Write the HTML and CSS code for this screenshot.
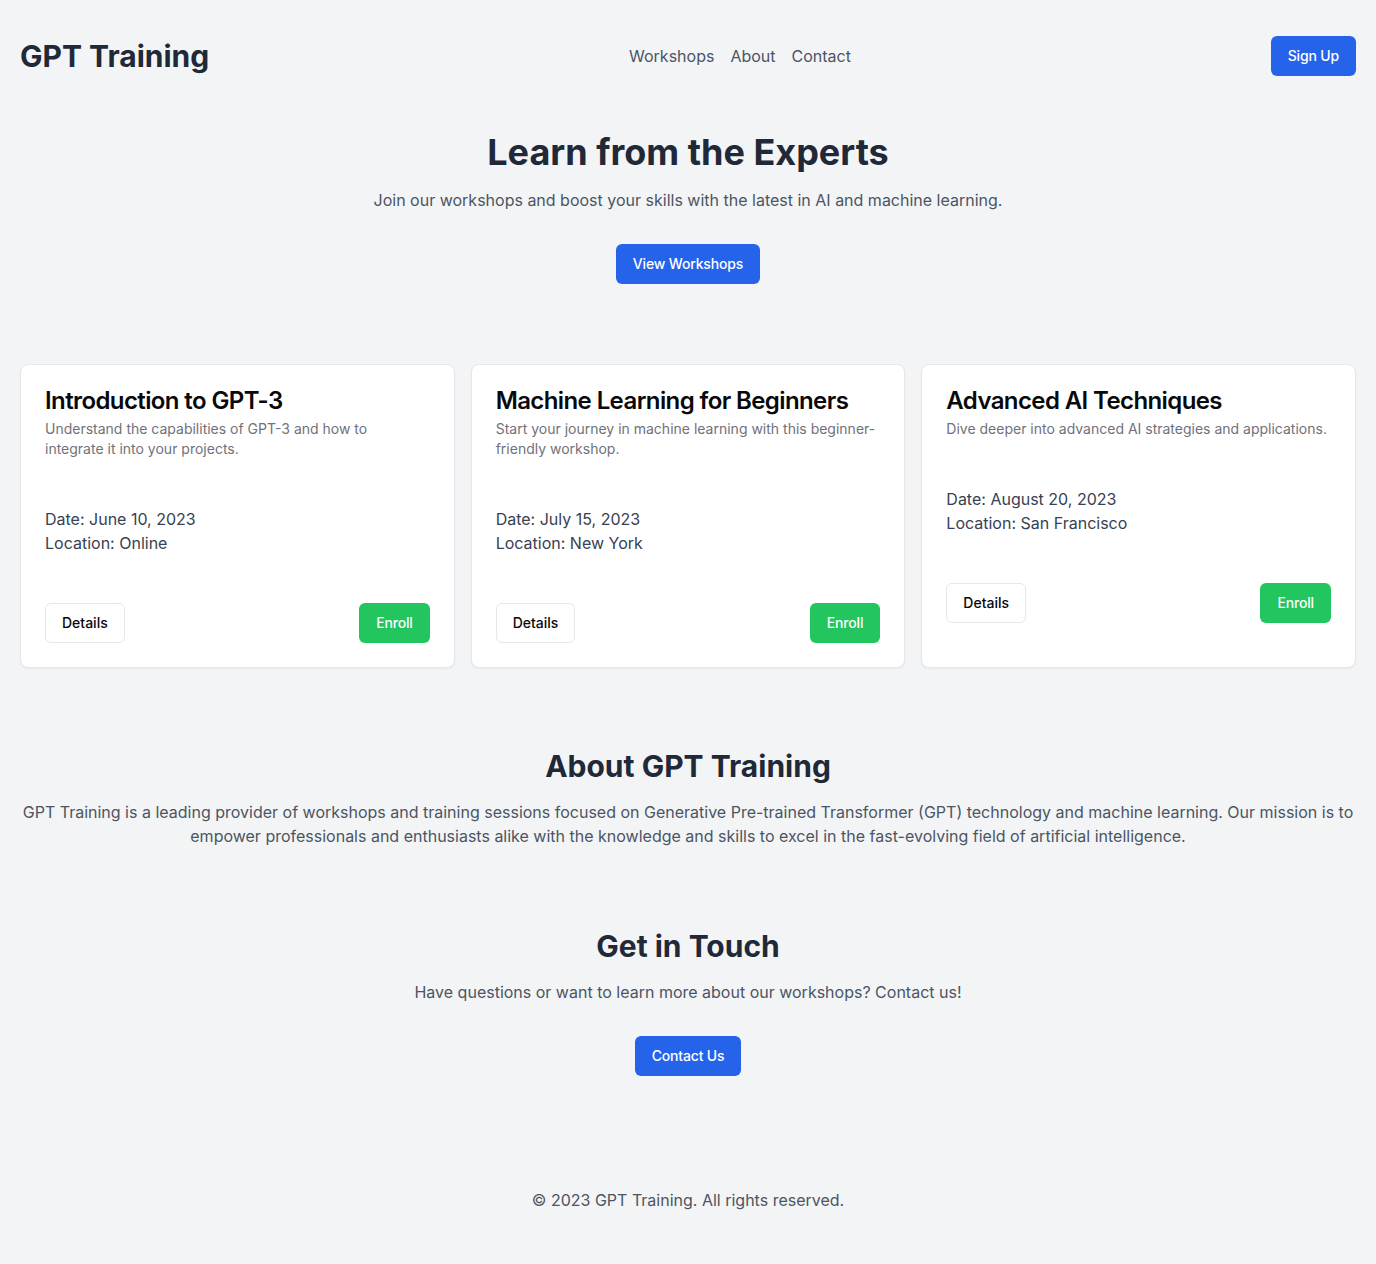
FILE: index.html
```html
<!DOCTYPE html>
<html lang="en">
<head>
<meta charset="utf-8">
<title>GPT Training</title>
<link rel="stylesheet" href="styles.css">
</head>
<body>
<div class="page">
  <header class="site-header">
    <div class="logo">GPT Training</div>
    <nav class="nav">
      <a href="#workshops">Workshops</a>
      <a href="#about">About</a>
      <a href="#contact">Contact</a>
    </nav>
    <button class="btn btn-primary">Sign Up</button>
  </header>

  <section class="hero">
    <h1>Learn from the Experts</h1>
    <p>Join our workshops and boost your skills with the latest in AI and machine learning.</p>
    <button class="btn btn-primary">View Workshops</button>
  </section>

  <section class="workshops" id="workshops">
    <div class="card">
      <div class="card-header">
        <h3 class="card-title">Introduction to GPT-3</h3>
        <p class="card-desc">Understand the capabilities of GPT-3 and how to integrate it into your projects.</p>
      </div>
      <div class="card-content">
        <p>Date: June 10, 2023</p>
        <p>Location: Online</p>
      </div>
      <div class="card-footer">
        <button class="btn btn-outline">Details</button>
        <button class="btn btn-green">Enroll</button>
      </div>
    </div>
    <div class="card">
      <div class="card-header">
        <h3 class="card-title">Machine Learning for Beginners</h3>
        <p class="card-desc">Start your journey in machine learning with this beginner-friendly workshop.</p>
      </div>
      <div class="card-content">
        <p>Date: July 15, 2023</p>
        <p>Location: New York</p>
      </div>
      <div class="card-footer">
        <button class="btn btn-outline">Details</button>
        <button class="btn btn-green">Enroll</button>
      </div>
    </div>
    <div class="card">
      <div class="card-header">
        <h3 class="card-title">Advanced AI Techniques</h3>
        <p class="card-desc">Dive deeper into advanced AI strategies and applications.</p>
      </div>
      <div class="card-content">
        <p>Date: August 20, 2023</p>
        <p>Location: San Francisco</p>
      </div>
      <div class="card-footer">
        <button class="btn btn-outline">Details</button>
        <button class="btn btn-green">Enroll</button>
      </div>
    </div>
  </section>

  <section class="about" id="about">
    <h2>About GPT Training</h2>
    <p>GPT Training is a leading provider of workshops and training sessions focused on Generative Pre-trained Transformer (GPT) technology and machine learning. Our mission is to empower professionals and enthusiasts alike with the knowledge and skills to excel in the fast-evolving field of artificial intelligence.</p>
  </section>

  <section class="contact" id="contact">
    <h2>Get in Touch</h2>
    <p>Have questions or want to learn more about our workshops? Contact us!</p>
    <button class="btn btn-primary">Contact Us</button>
  </section>

  <footer class="site-footer">
    <p>© 2023 GPT Training. All rights reserved.</p>
  </footer>
</div>
</body>
</html>
```

FILE: styles.css
```css
* {
  box-sizing: border-box;
}

html, body {
  margin: 0;
  padding: 0;
}

body {
  background: #f3f4f6;
  font-family: Inter, "Liberation Sans", Arial, sans-serif;
  color: #1f2937;
  font-size: 16px;
  line-height: 24px;
}

h1, h2, h3, p {
  margin: 0;
}

.page {
  padding: 20px;
}

.site-header {
  display: flex;
  justify-content: space-between;
  align-items: center;
  padding: 16px 0;
}

.logo {
  font-size: 30px;
  line-height: 36px;
  font-weight: 700;
  color: #1f2937;
}

.nav {
  display: flex;
  gap: 16px;
}

.nav a {
  color: #4b5563;
  text-decoration: none;
  font-size: 16px;
  line-height: 24px;
}

.btn {
  display: inline-flex;
  align-items: center;
  justify-content: center;
  height: 40px;
  padding: 0 16px;
  border-radius: 6px;
  font-family: inherit;
  font-size: 14px;
  line-height: 20px;
  font-weight: 500;
  border: 1px solid transparent;
  cursor: pointer;
}

.btn-primary {
  background: #2563eb;
  color: #ffffff;
  letter-spacing: -0.012em;
}

.btn-green {
  background: #22c55e;
  color: #ffffff;
  letter-spacing: -0.012em;
}

.btn-outline {
  background: #ffffff;
  border-color: #e5e7eb;
  color: #09090b;
}

.hero {
  padding: 40px 0;
  text-align: center;
}

.hero h1 {
  font-size: 36px;
  line-height: 40px;
  font-weight: 700;
  color: #1f2937;
  margin-bottom: 16px;
}

.hero p {
  color: #4b5563;
  margin-bottom: 32px;
}

.workshops {
  display: grid;
  grid-template-columns: repeat(3, 1fr);
  gap: 16px;
  padding: 40px 0;
}

.card {
  background: #ffffff;
  border: 1px solid #e5e7eb;
  border-radius: 8px;
  box-shadow: 0 1px 2px rgba(0, 0, 0, 0.05);
  display: flex;
  flex-direction: column;
}

.card-header {
  padding: 24px 24px 24px;
  display: flex;
  flex-direction: column;
  gap: 6px;
}

.card-title {
  font-size: 24px;
  line-height: 24px;
  font-weight: 600;
  letter-spacing: -0.025em;
  color: #09090b;
}

.card-desc {
  font-size: 14px;
  line-height: 20px;
  color: #71717a;
}

.card-content {
  padding: 24px;
  color: #374151;
}

.card-footer {
  padding: 24px;
  display: flex;
  justify-content: space-between;
  align-items: center;
}

.about,
.contact {
  padding: 40px 0;
  text-align: center;
}

.about h2,
.contact h2 {
  font-size: 30px;
  line-height: 36px;
  font-weight: 700;
  color: #1f2937;
  margin-bottom: 16px;
}

.about p,
.contact p {
  color: #4b5563;
}

.contact p {
  margin-bottom: 32px;
}

.site-footer {
  padding: 72px 0 40px;
  text-align: center;
  color: #4b5563;
}
```
